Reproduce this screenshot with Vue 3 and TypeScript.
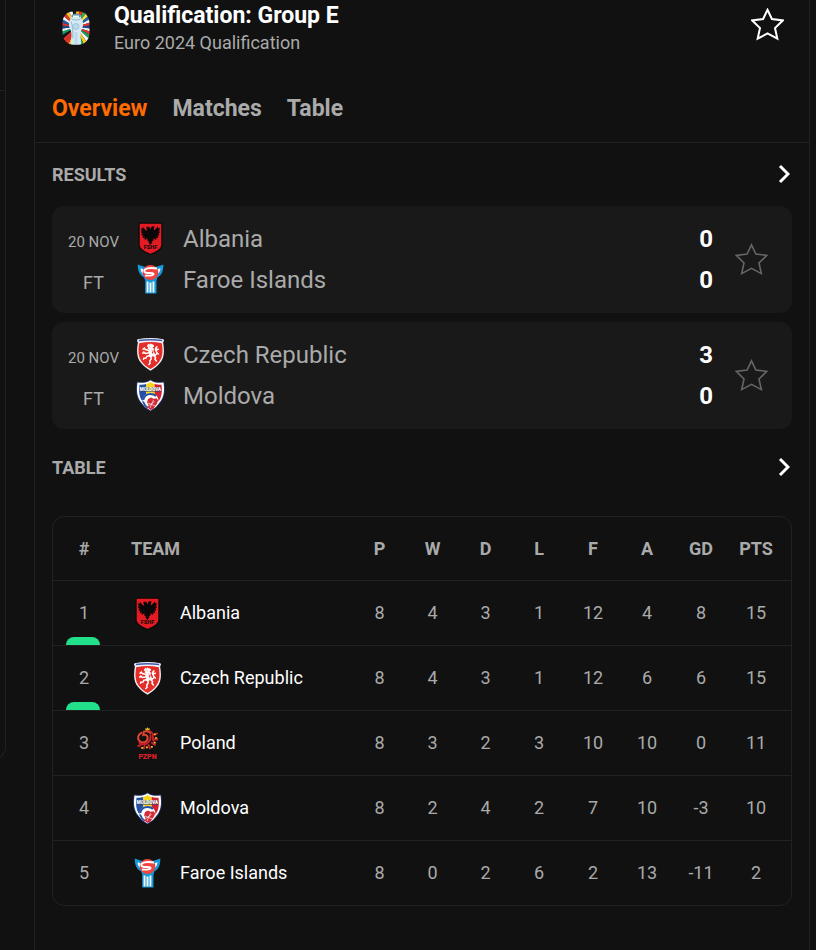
<script setup lang="ts">
import { ref } from 'vue'

interface Side {
  name: string
  crest: string
  score: number
}

interface Match {
  id: number
  date: string
  status: string
  sides: Side[]
}

interface Standing {
  team: string
  crest: string
  qualified: boolean
  stats: number[]
}

const tabs: string[] = ['Overview', 'Matches', 'Table']
const activeTab = ref('Overview')

const matches: Match[] = [
  {
    id: 1,
    date: '20 NOV',
    status: 'FT',
    sides: [
      { name: 'Albania', crest: 'albania', score: 0 },
      { name: 'Faroe Islands', crest: 'faroe', score: 0 },
    ],
  },
  {
    id: 2,
    date: '20 NOV',
    status: 'FT',
    sides: [
      { name: 'Czech Republic', crest: 'czech', score: 3 },
      { name: 'Moldova', crest: 'moldova', score: 0 },
    ],
  },
]

const statColumns: string[] = ['P', 'W', 'D', 'L', 'F', 'A', 'GD', 'PTS']

const standings: Standing[] = [
  { team: 'Albania', crest: 'albania', qualified: true, stats: [8, 4, 3, 1, 12, 4, 8, 15] },
  { team: 'Czech Republic', crest: 'czech', qualified: true, stats: [8, 4, 3, 1, 12, 6, 6, 15] },
  { team: 'Poland', crest: 'poland', qualified: false, stats: [8, 3, 2, 3, 10, 10, 0, 11] },
  { team: 'Moldova', crest: 'moldova', qualified: false, stats: [8, 2, 4, 2, 7, 10, -3, 10] },
  { team: 'Faroe Islands', crest: 'faroe', qualified: false, stats: [8, 0, 2, 6, 2, 13, -11, 2] },
]

// Contents of each federation crest, drawn in a 33 x 33 view box
const crests: Record<string, string> = {
  albania: `
    <path d="M4.500 .5h24v22.500c0 5-7 8-12 10-5-2-12-5-12-10z" fill="#090909"/>
    <path d="M5.700 1.700h21.600v21c0 4.300-6.300 7.200-10.800 9-4.500-1.800-10.800-4.700-10.800-9z" fill="#e51b24"/>
    <path d="M16.500 7l-1.400-2.300-3 .3.800 1.900-.4 2-3.700-4.200v2.200l-1.600-1v2.300l1.500 1.100-1.700-.1.300 1.900 1.700.2-1.500.6.600 1.900 1.800-.4-1.500 1.500 1 1.400 1.700-1.200-.9 2 1.300.7 1.900-1.900-.2 2.500 1.500.5-.2 1.400 1.900 2.900 1.900-2.900-.2-1.400 1.500-.5-.2-2.500 1.900 1.900 1.300-.7-.9-2 1.700 1.200 1-1.400-1.500-1.500 1.800.4.600-1.900-1.500-.6 1.700-.2.300-1.900-1.700.1 1.500-1.100V5.500l-1.600 1V4.300l-3.700 4.200-.4-2 .8-1.900-3-.3z" fill="#0b0708"/>
    <text x="16.500" y="27.300" font-size="5.500" fill="#14080a">FSHF</text>`,
  faroe: `
    <path d="M3.700 1.500l6.500 2.300h12.600l6.500-2.300c.2 6.500-1.800 11-5.800 12.800l-1 3.200v13H11.200v-13l-1.200-3.200C6 12.500 3.600 8 3.700 1.500z" fill="#1597d8"/>
    <path d="M6.500 5.300l4.500 1.400-.6 4.800C8 10.500 6.700 8.400 6.500 5.300zM26.500 5.300L22 6.700l.6 4.800c2.400-1 3.700-3.100 3.900-6.200z" fill="#f1f8fb"/>
    <path d="M12.600 18.500h1.900v11h-1.900zM15.500 19.500h2v10h-2zM18.500 18.500h1.900v11h-1.900z" fill="#f1f8fb"/>
    <ellipse cx="16.500" cy="9.500" rx="7.800" ry="7.500" fill="#f04440"/>
    <path d="M23 5.500c-4.300-.6-9.900-.7-12 1-1.600 1.500-.5 3.300 2.300 3.500 3 .2 6.500-.2 6.300 1.100-.2 1.400-4.600 1.700-8.600 1.500" fill="none" stroke="#fff" stroke-width="1.900"/>`,
  czech: `
    <path d="M3.500 1.200Q16.500-1 29.500 1.200l.5 1.800-.9 1.200c1.500 8.800 1.300 15.500-3.200 20.800-2.600 3.200-5.700 5.500-9.400 7.700C12.800 30.500 9.700 28.200 7.100 25 2.600 19.700 2.400 13 3.900 4.200L3 3z" fill="#f1f0f4"/>
    <path d="M5 1.700Q16.500.1 28 1.700l.3 1.500Q16.500 1.800 4.700 3.200z" fill="#4158ac"/>
    <path d="M5.200 5.200Q16.500 3 27.800 5.200c1.300 8 1 14-2.800 18.700-2.300 2.900-5 5.100-8.500 7.200-3.500-2.100-6.200-4.300-8.500-7.200C4.200 19.200 3.900 13.200 5.200 5.200z" fill="#e42d28"/>
    <path d="M14 6.200l1.600.6 1-.9 1.200.8 1.500.3.200 1.500-1.200.8 1.200 1.600-.6 2.400.9 1.500-.7 1.600 1.600 1.700 1.300-.8M14.200 6.500l-1 1.700 1.500.6-.7 1.500 1.400 1.400-.8 2.600 1.200 1.700-1.300 1.700 2.200 1.400 2.500-1.600-1.700-3-.3-4-1.300-2.500z" fill="#fff" stroke="#fff" stroke-width=".9"/>
    <path d="M14.300 12.300l-3-.7-.9-1.400-1.300 1M14.500 15l-3.200.4-1.500-1.300-1 1.200M15.300 17.700l-2.500.6-.8 1.800-2.200.2-.3 1M16.700 18l.5 2.800-1.400 2.200.2 2.500-1.200 1M19.700 17.700l1.900 1.700-.6 2 1.400 1.600M20 17.300c2.800-.7 3.800-2 2.300-4-1.400-1.800-.9-3.300.6-4.500M22.300 11.700l2-.5M22.700 14.700l1.700 1.300" fill="none" stroke="#fff" stroke-width="1.500" stroke-linecap="round"/>`,
  poland: `
    <g fill="none" stroke-linecap="round">
      <path d="M10.300 5.800c-3.200 1.600-4 5-2.400 7.500 1.700 2.700 5.700 2.900 7.700.5 1.800-2.200 1.200-4.500-.5-5.600-1.400-.9-2.800-.3-2.800-.3l.6-3.300c2.500-.6 4.800-.2 6.500 1.300" stroke="#e2462c" stroke-width="2"/>
      <path d="M18.500 4c3 1.300 4 3.600 3.400 6.200-.4 2-.1 3 1.300 4.200M19.500 8.200c.6 3.300-.6 6.200-3.500 8.200-2.700 1.200-5.700 1-7.800-.8" stroke="#c91f28" stroke-width="1.900"/>
      <path d="M23.800 7.800l2.200-1.300M23 12.300l3.200.3M21 15.800l3 2M17.500 18l1.500 3.300M13.500 18.700l-.5 2.700M9.800 18l-2.500 1" stroke="#c91f28" stroke-width="2"/>
    </g>
    <path d="M14.200 1l1.200.8L16.500.2l1.100 1.600 1.200-.8-.4 2.200h-3.800zM22.700 6.500h2v1.600h-2zM24 10.300h2.200v1.500H24zM22.800 15h2v1.600h-2zM20 19h1.800v1.700H20zM15 19.500h1.900v1.700H15zM10.200 20h2v1.700h-2z" fill="#eebd2b"/>
    <text x="16.500" y="32" font-size="7" fill="#df202a">PZPN</text>`,
  moldova: `
    <path d="M16.500.5c3.300 2.500 8.300 3 13.700 2 1.600 10.500 1.600 20.500-13.700 30C1.200 23 1.200 13 2.800 2.500c5.400 1 10.400.5 13.700-2z" fill="#26366c"/>
    <path d="M16.500 1.300c3.500 2.500 8 3 13 2.200 1.400 10 1 19.200-13 28C2.500 22.700 2.100 13.500 3.500 3.500c5 .8 9.500.3 13-2.200z" fill="#fff"/>
    <path d="M12.300 5c-2 .7-4.500.9-6.800.7-.8 7.500-.4 12.300 3.300 17l3.500-1z" fill="#2450a5"/>
    <path d="M12.300 5c1.500-.4 2.900-1 4.200-1.900 1.300.9 2.700 1.500 4.200 1.900v15h-8.400z" fill="#f9d51b"/>
    <path d="M20.700 5c2 .7 4.500.9 6.800.7.800 7.500.4 12.300-3.300 17l-3.500-1z" fill="#d32131"/>
    <circle cx="16.500" cy="22" r="8" fill="#fff"/>
    <path d="M9.300 21c.7-4 3.600-6 7.200-6 2.500 0 4.300.7 5.500 2.100M9 22.500c1 3 3 5.200 5 6.500" fill="none" stroke="#2450a5" stroke-width="1.900"/>
    <path d="M14 20l3-1.500 2.500 1.200 3-.5 1.700 2-1 3-3.700 5.200-3 1.500-3.500-3 1.500-2-1.400-2.700z" fill="#d32c37"/>
    <path d="M14 24l7.500 3M16 29l3.500-8M13.500 27.500l7-5" stroke="#fff" stroke-width=".6"/>
    <path d="M6 8h21v5H6z" fill="#304468" opacity=".6"/>
    <text x="16.500" y="12.200" font-size="4.500" fill="#fff">MOLDOVA</text>`,
}

// Flag-coloured rays that fan out behind the trophy
const rayColors: string[] = [
  '#f5b51b', '#e3342b', '#3ba35b', '#f4e04a', '#1c5fae', '#f2f6f8', '#e3342b', '#1c4b96',
  '#f2f6f8', '#e3342b', '#16a05c', '#f2f6f8', '#f7c81e', '#16a05c', '#f2f6f8', '#dfeaf0',
  '#f7c81e', '#e3342b', '#e3342b', '#15171c', '#16a05c', '#f2f6f8', '#1c4b96', '#e3342b',
  '#1c5fae', '#f2f6f8', '#e3342b', '#f7c81e', '#f2f6f8', '#15171c',
]

const rays = rayColors.map((fill, i) => {
  const step = (Math.PI * 2) / rayColors.length
  const from = i * step - Math.PI / 2
  const to = from + step
  const point = (a: number) => `${(14 + 24 * Math.cos(a)).toFixed(2)} ${(16 + 24 * Math.sin(a)).toFixed(2)}`
  return { fill, d: `M14 16L${point(from)}L${point(to)}Z` }
})

const starPath =
  'M16.500 1.800L20.900 11L31.800 12.400L24 20L26.300 30.600L16.500 25.400L6.700 30.600L9 20L1.200 12.400L12.100 11Z'
</script>

<template>
  <div class="page">
    <aside class="side">
      <div class="side-panel">
        <div class="side-head"></div>
      </div>
    </aside>

    <main class="panel">
      <header class="head">
        <div class="head-row">
          <svg class="logo" viewBox="0 0 28 34" aria-hidden="true">
            <clipPath id="badge"><rect x=".5" y=".5" width="27" height="33" rx="10.500" ry="11" /></clipPath>
            <g clip-path="url(#badge)">
              <path v-for="ray in rays" :key="ray.d" :d="ray.d" :fill="ray.fill" />
              <path d="M9.500 4.500c2-2 7-2 9 0l.8 3.200c2.200 2.500 2.400 6.300.8 9.800-1.300 2.600-1.800 5-1.500 8.500l.7 8H8.700l.7-8c.3-3.500-.2-5.900-1.500-8.500-1.600-3.500-1.400-7.300.8-9.800z" fill="#d7eaf3" />
              <path d="M9.500 4c2.500-1.800 6.500-1.800 9 0v2.300h-9z" fill="#5d94aa" />
              <path d="M11 4.500h6v2h-6z" fill="#eef7fa" />
              <path d="M9.500 8c3 1.400 6 1.400 9 0M9 10.500c1.700 4 2.200 10 1.800 17" fill="none" stroke="#8db8cf" stroke-width="1" />
              <circle cx="14" cy="15.500" r="3" fill="#bcd9e9" stroke="#9cc5dd" />
              <path d="M12.800 21h2.600l.5 12h-3.600z" fill="#bddceb" />
            </g>
          </svg>
          <div class="titles">
            <h1>Qualification: Group E</h1>
            <p>Euro 2024 Qualification</p>
          </div>
          <button class="star star-main" type="button" aria-label="Follow competition">
            <svg viewBox="0 0 33 33"><path :d="starPath" /></svg>
          </button>
        </div>
        <nav class="tabs">
          <a
            v-for="tab in tabs"
            :key="tab"
            href="#"
            :class="{ active: tab === activeTab }"
            @click.prevent="activeTab = tab"
          >{{ tab }}</a>
        </nav>
      </header>

      <section class="results">
        <div class="section-head">
          <h2>RESULTS</h2>
          <a href="#" aria-label="All results">
            <svg class="chevron" viewBox="0 0 12 20"><path d="M2 2l8 8-8 8" /></svg>
          </a>
        </div>
        <div class="match-list">
          <article v-for="match in matches" :key="match.id" class="match">
            <div class="when">
              <span class="date">{{ match.date }}</span>
              <span>{{ match.status }}</span>
            </div>
            <div class="sides">
              <div v-for="side in match.sides" :key="side.name" class="side-row">
                <svg class="crest" viewBox="0 0 33 33" aria-hidden="true" v-html="crests[side.crest]"></svg>
                <span class="name">{{ side.name }}</span>
                <strong>{{ side.score }}</strong>
              </div>
            </div>
            <button class="star" type="button" aria-label="Follow match">
              <svg viewBox="0 0 33 33"><path :d="starPath" /></svg>
            </button>
          </article>
        </div>
      </section>

      <section class="standings">
        <div class="section-head">
          <h2>TABLE</h2>
          <a href="#" aria-label="Full table">
            <svg class="chevron" viewBox="0 0 12 20"><path d="M2 2l8 8-8 8" /></svg>
          </a>
        </div>
        <div class="table-frame">
          <table>
            <colgroup>
              <col class="col-rank" />
              <col />
              <col v-for="n in 3" :key="'n' + n" class="col-narrow" />
              <col v-for="n in 4" :key="'w' + n" class="col-stat" />
              <col class="col-points" />
            </colgroup>
            <thead>
              <tr>
                <th scope="col">#</th>
                <th scope="col" class="team">TEAM</th>
                <th v-for="column in statColumns" :key="column" scope="col">{{ column }}</th>
              </tr>
            </thead>
            <tbody>
              <tr v-for="(row, i) in standings" :key="row.team">
                <td :class="{ qualified: row.qualified }">{{ i + 1 }}</td>
                <td class="team">
                  <div class="team-cell">
                    <svg class="crest" viewBox="0 0 33 33" aria-hidden="true" v-html="crests[row.crest]"></svg>
                    <span>{{ row.team }}</span>
                  </div>
                </td>
                <td v-for="(value, c) in row.stats" :key="c">{{ value }}</td>
              </tr>
            </tbody>
          </table>
        </div>
      </section>
    </main>
  </div>
</template>

<style>
body {
  margin: 0;
  background: #111111;
}
</style>

<style scoped>
.page {
  display: flex;
  gap: 28px;
  min-height: 100vh;
  padding-right: 6px;
  box-sizing: border-box;
  font-family: Roboto, "Liberation Sans", sans-serif;
  font-size: 18px;
  line-height: 24px;
  color: #aaaaaa;
  background: #111111;
}

h1,
h2,
p {
  margin: 0;
}

a {
  color: inherit;
  text-decoration: none;
}

.side {
  flex: none;
  width: 6px;
  overflow: hidden;
}

.side-panel {
  box-sizing: border-box;
  height: 759px;
  margin-left: -24px;
  border: 1px solid #222222;
  border-top: 0;
  border-radius: 0 0 12px 12px;
}

.side-head {
  height: 90px;
  border-bottom: 1px solid #222222;
}

.panel {
  flex: 1;
  min-width: 0;
  border: solid #222222;
  border-width: 0 1px;
}

.head {
  padding: 1px 17px 19px;
  border-bottom: 1px solid #222222;
}

.head-row {
  display: flex;
  align-items: center;
}

.logo {
  width: 28px;
  height: 34px;
  margin: 0 24px 0 10px;
}

.titles {
  flex: 1;
}

h1 {
  font-size: 23px;
  line-height: 30px;
  font-weight: 700;
  color: #ffffff;
}

.tabs {
  display: flex;
  gap: 25px;
  margin-top: 40px;
  font-size: 23px;
  line-height: 28px;
  font-weight: 700;
}

.tabs .active {
  color: #ff6b00;
}

.star {
  flex: none;
  display: block;
  padding: 0;
  border: 0;
  background: none;
  color: #666666;
  cursor: pointer;
}

.star svg {
  display: block;
  width: 33px;
  height: 33px;
  fill: none;
  stroke: currentColor;
  stroke-width: 1.6;
}

.star-main {
  margin: 0 8px 8px;
  color: #ffffff;
}

.star-main svg {
  stroke-width: 2;
}

.results {
  padding: 20px 17px 0;
}

.standings {
  padding: 27px 17px 43px;
}

.section-head {
  display: flex;
  align-items: center;
  justify-content: space-between;
}

h2 {
  font-size: 18px;
  line-height: 24px;
  font-weight: 700;
}

.chevron {
  display: block;
  width: 12px;
  height: 20px;
  margin: 0 2px 2px 0;
  fill: none;
  stroke: #ffffff;
  stroke-width: 3;
}

.match-list {
  display: flex;
  flex-direction: column;
  gap: 9px;
  margin-top: 19px;
}

.match {
  display: flex;
  align-items: center;
  padding: 9px 24px 10px 16px;
  border-radius: 12px;
  background: #191919;
}

.when {
  display: grid;
  grid-template-rows: 41px 41px;
  align-items: center;
  justify-items: center;
  min-width: 50px;
  padding-top: 6px;
}

.date {
  font-size: 15px;
}

.sides {
  flex: 1;
  display: grid;
  grid-template-rows: 41px 41px;
  margin-left: 15px;
  margin-right: 22px;
}

.side-row {
  display: flex;
  align-items: center;
  gap: 16px;
  font-size: 24px;
}

.name {
  flex: 1;
}

.side-row strong {
  font-weight: 700;
  color: #ffffff;
}

.crest {
  flex: none;
  width: 33px;
  height: 33px;
  font-weight: 900;
  text-anchor: middle;
}

.table-frame {
  margin-top: 36px;
  border: 1px solid #222222;
  border-radius: 12px;
  overflow: hidden;
}

table {
  width: 100%;
  table-layout: fixed;
  border-collapse: separate;
  border-spacing: 0;
}

.col-rank {
  width: 62px;
}

.col-narrow {
  width: 53px;
}

.col-stat {
  width: 54px;
}

.col-points {
  width: 63px;
}

th,
td {
  padding: 0;
  text-align: center;
}

th {
  height: 63px;
  font-weight: 700;
}

td {
  position: relative;
  height: 64px;
  border-top: 1px solid #222222;
}

th:last-child,
td:last-child {
  padding-right: 7px;
}

.team {
  padding-left: 16px;
  text-align: left;
}

.team-cell {
  display: flex;
  align-items: center;
  gap: 16px;
  color: #ffffff;
}

.qualified::after {
  content: "";
  position: absolute;
  left: 13px;
  right: 15px;
  bottom: 0;
  height: 8px;
  border-radius: 8px 8px 0 0;
  background: #22e08a;
}
</style>
